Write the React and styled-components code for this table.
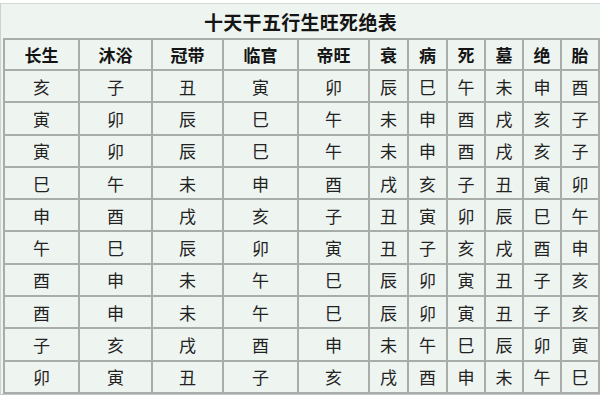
import React from "react";
import styled, { createGlobalStyle } from "styled-components";

const GlobalStyle = createGlobalStyle`
  html, body {
    margin: 0;
    padding: 0;
    background: #ffffff;
    overflow: hidden;
  }
  body {
    font-family: "Noto Sans CJK SC", "Noto Sans", sans-serif;
    color: #1c1c1c;
  }
`;

const headers = ["长生", "沐浴", "冠带", "临官", "帝旺", "衰", "病", "死", "墓", "绝", "胎"];
const widths = [75, 73, 71, 75, 71, 39, 39, 38, 38, 38, 38];

const rows = [
  "亥子丑寅卯辰巳午未申酉",
  "寅卯辰巳午未申酉戌亥子",
  "寅卯辰巳午未申酉戌亥子",
  "巳午未申酉戌亥子丑寅卯",
  "申酉戌亥子丑寅卯辰巳午",
  "午巳辰卯寅丑子亥戌酉申",
  "酉申未午巳辰卯寅丑子亥",
  "酉申未午巳辰卯寅丑子亥",
  "子亥戌酉申未午巳辰卯寅",
  "卯寅丑子亥戌酉申未午巳",
];

function App() {
  return (
    <>
      <GlobalStyle />
      <Page>
        <Frame>
          <Title>十天干五行生旺死绝表</Title>
          <Grid>
            <colgroup>
              {widths.map((w, i) => (
                <col key={i} style={{ width: w }} />
              ))}
            </colgroup>
            <thead>
              <HeadRow>
                {headers.map((h) => (
                  <HeadCell key={h}>{h}</HeadCell>
                ))}
              </HeadRow>
            </thead>
            <tbody>
              {rows.map((r, i) => (
                <BodyRow key={i}>
                  {Array.from(r).map((c, j) => (
                    <Cell key={j}>{c}</Cell>
                  ))}
                </BodyRow>
              ))}
            </tbody>
          </Grid>
        </Frame>
      </Page>
    </>
  );
}

const Page = styled.div`
  width: 600px;
  height: 400px;
  padding-top: 3px;
  box-sizing: border-box;
  background: #ffffff;
`;

const Frame = styled.div`
  width: 604px;
  border-top: 1px solid #d3d8d4;
  border-left: 1px solid #cdd2ce;
  border-bottom: 1px solid #c4c8c4;
  background: #eef4f0;
  padding: 0 0 0 1px;
`;

const Title = styled.div`
  width: 597px;
  height: 34px;
  display: flex;
  align-items: center;
  justify-content: center;
  font-size: 19px;
  font-weight: 700;
  letter-spacing: 0.3px;
  color: #151515;
`;

const Grid = styled.table`
  border-collapse: collapse;
  table-layout: fixed;
  width: 597px;
  margin-left: 1px;
`;

const HeadRow = styled.tr`
  height: 31px;
`;

const BodyRow = styled.tr`
  height: 32.3px;
`;

const HeadCell = styled.th`
  border: 2px solid #a9ada9;
  padding: 0;
  text-align: center;
  font-size: 17px;
  font-weight: 700;
  color: #141414;
  background: #eef4f0;
`;

const Cell = styled.td`
  border: 2px solid #a9ada9;
  padding: 0;
  text-align: center;
  font-size: 17px;
  font-weight: 400;
  color: #222222;
  background: #eef4f0;
`;

export default App;
